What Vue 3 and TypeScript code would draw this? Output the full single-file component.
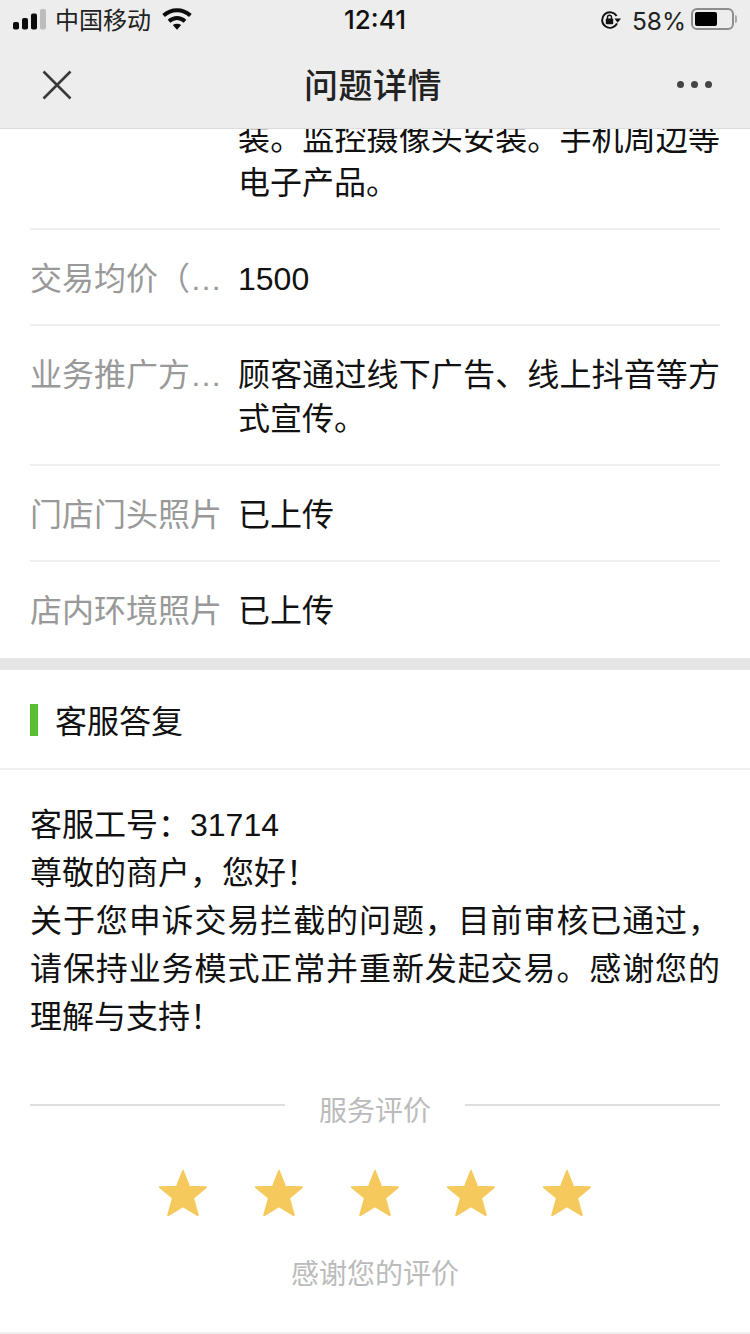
<script setup lang="ts">
interface Row { label: string; value: string }
const rows: Row[] = [
  { label: '', value: '装。监控摄像头安装。手机周边等电子产品。' },
  { label: '交易均价（元）', value: '1500' },
  { label: '业务推广方式及渠道', value: '顾客通过线下广告、线上抖音等方式宣传。' },
  { label: '门店门头照片', value: '已上传' },
  { label: '店内环境照片', value: '已上传' },
]
const reply: string[] = [
  '客服工号：31714',
  '尊敬的商户，您好！',
  '关于您申诉交易拦截的问题，目前审核已通过，请保持业务模式正常并重新发起交易。感谢您的理解与支持！',
]
const stars = [1, 2, 3, 4, 5]
</script>

<template>
  <div class="page">
    <header class="top">
      <div class="status">
        <div class="status-left">
          <svg class="signal" width="33" height="21" viewBox="0 0 33 21">
            <rect x="0" y="13" width="6" height="7.5" rx="1.8" fill="#0c0c0c" />
            <rect x="9" y="9" width="6" height="11.5" rx="1.8" fill="#0c0c0c" />
            <rect x="18" y="4.5" width="6" height="16" rx="1.8" fill="#0c0c0c" />
            <rect x="27" y="0" width="6" height="20.5" rx="1.8" fill="#bdbdbd" />
          </svg>
          <span class="carrier">中国移动</span>
          <svg class="wifi" width="30" height="22" viewBox="0 0 30 22">
            <path d="M1.6 7.6 C9.4 0.6 20.6 0.6 28.4 7.6" fill="none" stroke="#0c0c0c" stroke-width="4" />
            <path d="M7 13.2 C12 9 18 9 23 13.2" fill="none" stroke="#0c0c0c" stroke-width="4" />
            <path d="M10.8 17 C13.4 15.2 16.6 15.2 19.2 17 L15 21.8 Z" fill="#0c0c0c" />
          </svg>
        </div>
        <span class="time">12:41</span>
        <div class="status-right">
          <svg class="lock" width="20" height="18" viewBox="0 0 20 18">
            <path d="M15.6 5 A7.8 7.8 0 1 0 16 12.4" fill="none" stroke="#111" stroke-width="1.9" />
            <path d="M13.4 7.6 L20 7.6 L16.7 11.8 Z" fill="#111" />
            <rect x="4.8" y="7.4" width="7.4" height="5.8" rx="1" fill="#111" />
            <path d="M6.5 8 V6.2 A2 2 0 0 1 10.5 6.2 V8" fill="none" stroke="#111" stroke-width="1.4" />
          </svg>
          <span class="pct">58%</span>
          <div class="battery"><div class="level"></div></div>
          <div class="cap"></div>
        </div>
      </div>
      <div class="nav">
        <svg class="close" width="30" height="30" viewBox="0 0 30 30">
          <path d="M1.5 1.5 L28.5 28.5 M28.5 1.5 L1.5 28.5" stroke="#3a3a3a" stroke-width="2.6" fill="none" />
        </svg>
        <h1 class="title">问题详情</h1>
        <div class="more"><i></i><i></i><i></i></div>
      </div>
    </header>

    <section class="info">
      <div v-for="(r, i) in rows" :key="i" class="row" :class="{ first: i === 0, last: i === rows.length - 1 }">
        <div class="label">{{ r.label }}</div>
        <div class="value">{{ r.value }}</div>
      </div>
    </section>

    <div class="band"></div>

    <div class="sec-head"><span class="mark"></span><span>客服答复</span></div>

    <section class="reply">
      <p v-for="(l, i) in reply" :key="i">{{ l }}</p>
    </section>

    <div class="rate-head"><span class="rule"></span><span class="rate-title">服务评价</span><span class="rule"></span></div>

    <div class="stars">
      <svg v-for="s in stars" :key="s" width="50" height="48" viewBox="0 0 50 48">
        <path d="M25 2 L31.2 17.8 L48 18.2 L35 29 L39.8 46.2 L25 37.2 L10.2 46.2 L15 29 L2 18.2 L18.8 17.8 Z" fill="#f5c95c" stroke="#f5c95c" stroke-width="2" stroke-linejoin="round" />
      </svg>
    </div>

    <div class="thanks">感谢您的评价</div>
  </div>
</template>

<style scoped>
.page {
  width: 750px;
  height: 1334px;
  overflow: hidden;
  background: #fff;
  color: #111;
  font-family: "Liberation Sans", "Noto Sans CJK SC", sans-serif;
}
.top {
  position: relative;
  z-index: 2;
  height: 129px;
  box-sizing: border-box;
  background: #ededed;
  border-bottom: 1px solid #dcdcdc;
}
.status {
  height: 38px;
  display: grid;
  grid-template-columns: 1fr auto 1fr;
  align-items: center;
  padding: 0 13px 0 13px;
}
.status-left, .status-right { display: flex; align-items: center; }
.status-right { justify-content: flex-end; }
.carrier { font-size: 24px; line-height: 34px; margin: 4px 0 0 9px; color: #222; }
.wifi { margin-left: 11px; }
.time { font-size: 26px; font-weight: 500; font-family: "Inter", "Liberation Sans", sans-serif; }
.lock { margin-top: 2px; }
.pct { margin: 3px 0 0 11px; color: #222; font-family: "Inter", "Liberation Sans", sans-serif; font-size: 24.5px; }
.battery {
  width: 43px;
  height: 22px;
  box-sizing: border-box;
  margin-left: 5px;
  border: 2px solid #8d8d8d;
  border-radius: 6px;
  padding: 2px;
}
.level { width: 22px; height: 14px; background: #000; border-radius: 2px; }
.cap { width: 2px; height: 8px; background: #a8a8a8; margin-left: 1px; border-radius: 0 2px 2px 0; }
.nav {
  height: 90px;
  display: grid;
  grid-template-columns: 262px 138px 1fr;
  align-items: center;
  padding: 0 38px 12px 42px;
}
.close { display: block; margin-top: 4px; }
.title { margin: 0; font-size: 34px; letter-spacing: 0.5px; font-weight: 500; color: #222; white-space: nowrap; }
.more { display: flex; justify-content: flex-end; gap: 7px; margin-top: 2px; }
.more i { width: 7px; height: 7px; border-radius: 50%; background: #444; }
.info { margin-top: -12px; padding: 0 30px; }
.row {
  display: flex;
  padding: 27px 0 23px;
  border-top: 2px solid #efefef;
  font-size: 32px;
  line-height: 44px;
}
.row.first { border-top: 0; padding: 0 0 23px; }
.row.last { padding-bottom: 25px; }
.label {
  width: 196px;
  flex: none;
  color: #999;
  white-space: nowrap;
  overflow: hidden;
  text-overflow: ellipsis;
}
.value { margin-left: 12px; flex: 1; text-align: justify; }
.band { height: 12px; background: #e6e6e6; }
.sec-head {
  height: 100px;
  box-sizing: border-box;
  display: flex;
  align-items: center;
  padding-left: 30px;
  border-bottom: 2px solid #efefef;
  font-size: 32px;
}
.mark { width: 8px; height: 32px; background: #58bf33; margin: 2px 17px 0 0; }
.reply { padding: 31px 30px 0; font-size: 32px; line-height: 48px; text-align: justify; }
.reply p { margin: 0; }
.rate-head {
  margin-top: 51px;
  padding: 0 30px;
  display: flex;
  align-items: flex-start;
  height: 44px;
}
.rule { flex: 1; height: 2px; background: #dedede; margin-top: 12px; }
.rate-title { width: 180px; text-align: center; font-size: 28px; line-height: 40px; color: #bbb; }
.stars {
  display: flex;
  justify-content: center;
  gap: 46px;
  margin-top: 33px;
}
.stars svg { display: block; }
.thanks {
  margin-top: 38px;
  padding-bottom: 37px;
  text-align: center;
  font-size: 28px;
  line-height: 40px;
  color: #bbb;
  border-bottom: 2px solid #efefef;
}
</style>
